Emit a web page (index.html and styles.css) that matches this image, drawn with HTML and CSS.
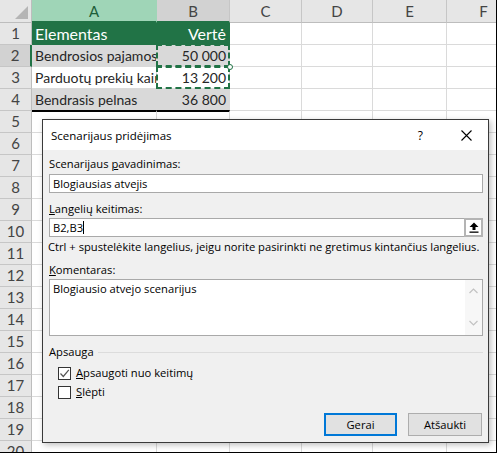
FILE: index.html
```html
<!DOCTYPE html>
<html lang="lt">
<head>
    <meta charset="UTF-8">
    <title>Scenarijaus pridėjimas</title>
    <link rel="stylesheet" href="styles.css">
</head>
<body>
    <div class="window">
        <div class="sheet" id="sheet">
            <div class="corner"><span class="tri"></span></div>
            <div class="ch ch-sel">A</div>
            <div class="ch ch-alt">B</div>
            <div class="ch">C</div>
            <div class="ch">D</div>
            <div class="ch">E</div>
            <div class="ch">F</div>

            <div class="rh">1</div>
            <div class="cell head">Elementas</div>
            <div class="cell head num">Vertė</div>
            <div class="cell"></div><div class="cell"></div><div class="cell"></div><div class="cell"></div>

            <div class="rh rh-sel">2</div>
            <div class="cell shade">Bendrosios pajamos</div>
            <div class="cell shade num ants handle">50 000</div>
            <div class="cell"></div><div class="cell"></div><div class="cell"></div><div class="cell"></div>

            <div class="rh">3</div>
            <div class="cell">Parduotų prekių kaina</div>
            <div class="cell num ants">13 200</div>
            <div class="cell"></div><div class="cell"></div><div class="cell"></div><div class="cell"></div>

            <div class="rh">4</div>
            <div class="cell shade">Bendrasis pelnas</div>
            <div class="cell shade num">36 800</div>
            <div class="cell"></div><div class="cell"></div><div class="cell"></div><div class="cell"></div>

            <div class="rh">5</div>
            <div class="cell edge"></div>
            <div class="cell edge"></div>
            <div class="cell"></div><div class="cell"></div><div class="cell"></div><div class="cell"></div>
        </div>

        <div class="dialog">
            <div class="dlg-title">
                <span class="dlg-caption">Scenarijaus pridėjimas</span>
                <span class="dlg-help">?</span>
                <svg class="dlg-close" width="11" height="11" viewBox="0 0 11 11">
                    <path d="M0.5 0.5 L10.5 10.5 M10.5 0.5 L0.5 10.5" stroke="#000" stroke-width="1.1" fill="none"/>
                </svg>
            </div>
            <div class="dlg-body">
                <div class="lbl">Scenarijaus <u>p</u>avadinimas:</div>
                <div class="field">Blogiausias atvejis</div>

                <div class="lbl lbl-gap"><u>L</u>angelių keitimas:</div>
                <div class="field field-ref">
                    <span>B2,B3</span><span class="caret"></span>
                    <span class="ref-btn">
                        <svg width="10" height="11" viewBox="0 0 10 11">
                            <path d="M5 0.5 L9.5 5 L6.5 5 L6.5 8 L3.5 8 L3.5 5 L0.5 5 Z" fill="#000"/>
                            <rect x="0.5" y="9.5" width="9" height="1.3" fill="#000"/>
                        </svg>
                    </span>
                </div>
                <div class="hint">Ctrl + spustelėkite langelius, jeigu norite pasirinkti ne gretimus kintančius langelius.</div>

                <div class="lbl lbl-gap"><u>K</u>omentaras:</div>
                <div class="memo">
                    <div class="memo-text">Blogiausio atvejo scenarijus</div>
                    <div class="scroll">
                        <svg width="9" height="6" viewBox="0 0 9 6"><path d="M0.5 5 L4.5 1 L8.5 5" stroke="#c2c2c2" stroke-width="1.2" fill="none"/></svg>
                        <svg width="9" height="6" viewBox="0 0 9 6"><path d="M0.5 1 L4.5 5 L8.5 1" stroke="#c2c2c2" stroke-width="1.2" fill="none"/></svg>
                    </div>
                </div>

                <div class="group">Apsauga</div>
                <label class="check first">
                    <span class="box">
                        <svg width="11" height="11" viewBox="0 0 11 11"><path d="M1.5 5.5 L4.3 8.5 L9.8 1.8" stroke="#555" stroke-width="1.2" fill="none"/></svg>
                    </span>
                    <span><u>A</u>psaugoti nuo keitimų</span>
                </label>
                <label class="check">
                    <span class="box"></span>
                    <span><u>S</u>lėpti</span>
                </label>

                <div class="btns">
                    <div class="btn primary">Gerai</div>
                    <div class="btn">Atšaukti</div>
                </div>
            </div>
        </div>
    </div>
    <script>
        const sheet = document.getElementById('sheet');
        for (let r = 6; r <= 20; r++) {
            let html = `<div class="rh">${r}</div>`;
            for (let c = 0; c < 6; c++) {
                html += '<div class="cell"></div>';
            }
            sheet.insertAdjacentHTML('beforeend', html);
        }
    </script>
</body>
</html>
```

FILE: styles.css
```css
body {
    margin: 0;
    background: #fff;
}

.window {
    position: relative;
    width: 497px;
    height: 453px;
    box-sizing: border-box;
    border-right: 1px solid #000;
    border-bottom: 1px solid #000;
    overflow: hidden;
}

.sheet {
    display: grid;
    grid-template-columns: 32px 125px 73px 72px 71px 74px 74px;
    grid-template-rows: 23px;
    grid-auto-rows: 22px;
    font-family: 'Lato', 'Liberation Sans', sans-serif;
    font-size: 15px;
    color: #262626;
}

.corner {
    position: relative;
    background: #e6e6e6;
    border-right: 1px solid #bdbdbd;
    border-bottom: 1px solid #bdbdbd;
}

.tri {
    position: absolute;
    right: 3px;
    bottom: 3px;
    width: 0;
    height: 0;
    border-left: 13px solid transparent;
    border-bottom: 13px solid #b5b5b5;
}

.ch {
    background: #e6e6e6;
    border-right: 1px solid #c6c6c6;
    border-bottom: 1px solid #bdbdbd;
    color: #444;
    text-align: center;
    line-height: 22px;
}

.ch-sel {
    background: #9fd5b7;
    color: #1e5e3a;
    border-bottom: 2px solid #217346;
    border-right-color: #9fd5b7;
}

.ch-alt {
    background: #d2d2d2;
    border-bottom: 2px solid #217346;
}

.rh {
    background: #e6e6e6;
    border-right: 1px solid #bdbdbd;
    border-bottom: 1px solid #c6c6c6;
    color: #444;
    text-align: center;
    line-height: 21px;
}

.rh-sel {
    background: #d2d2d2;
    border-right: 2px solid #217346;
}

.cell {
    position: relative;
    border-right: 1px solid #dadada;
    border-bottom: 1px solid #dadada;
    padding: 0 3px;
    font-size: 14px;
    line-height: 22px;
    white-space: nowrap;
    overflow: hidden;
}

.num {
    text-align: right;
    overflow: visible;
}

.head {
    background: #217346;
    color: #fff;
    border-color: #217346;
    font-size: 16px;
}

.shade {
    background: #d9d9d9;
    border-right-color: #d9d9d9;
    border-bottom-color: #d9d9d9;
}

.edge {
    border-top: 2px solid #000;
    margin-top: -1px;
}

.ants::after {
    content: '';
    position: absolute;
    left: -1px;
    top: -1px;
    right: -1px;
    bottom: -1px;
    border: 2px dashed #217346;
}

.handle::before {
    content: '';
    position: absolute;
    right: -4px;
    bottom: -4px;
    width: 4px;
    height: 4px;
    border: 1px solid #217346;
    border-radius: 50%;
    background: #fff;
    z-index: 1;
}

/* dialog */

.dialog {
    position: absolute;
    left: 42px;
    top: 119px;
    width: 447px;
    height: 324px;
    box-sizing: border-box;
    border: 1px solid #3a3a3a;
    background: #f0f0f0;
    box-shadow: 2px 2px 6px rgba(0, 0, 0, 0.25);
    display: flex;
    flex-direction: column;
    font-family: 'Open Sans', 'Noto Sans', sans-serif;
    font-size: 11.2px;
    color: #000;
}

.dlg-title {
    height: 30px;
    background: #fff;
    display: flex;
    align-items: center;
    padding-left: 8px;
    font-size: 11.5px;
}

.dlg-caption {
    flex: 1;
}

.dlg-help {
    margin-right: 38px;
    font-size: 12px;
}

.dlg-close {
    margin-right: 16px;
}

.dlg-body {
    flex: 1;
    display: flex;
    flex-direction: column;
    padding: 7px 5px 6px 6px;
}

.lbl {
    line-height: 14px;
    height: 14px;
    margin-bottom: 2px;
}

.lbl:first-child {
    margin-bottom: 3px;
}

.lbl-gap {
    margin-top: 9px;
}

.field {
    height: 19px;
    box-sizing: border-box;
    border: 1px solid #a9a9a9;
    background: #fff;
    padding-left: 3px;
    display: flex;
    align-items: center;
    white-space: nowrap;
}

.caret {
    width: 1px;
    height: 13px;
    background: #000;
}

.ref-btn {
    margin-left: auto;
    width: 19px;
    height: 19px;
    box-sizing: border-box;
    margin-right: -1px;
    border: 2px solid #b4b4b4;
    background: #fff;
    display: flex;
    align-items: center;
    justify-content: center;
}

.hint {
    line-height: 14px;
    margin-top: 3px;
    margin-left: -1px;
    white-space: nowrap;
}

.memo {
    height: 57px;
    box-sizing: border-box;
    border: 1px solid #a9a9a9;
    background: #fff;
    display: flex;
}

.memo-text {
    flex: 1;
    padding: 2px 3px;
    line-height: 14px;
}

.scroll {
    width: 17px;
    background: #f7f7f7;
    display: flex;
    flex-direction: column;
    justify-content: space-between;
    align-items: center;
    padding: 8px 0 9px;
}

.group {
    margin-top: 9px;
    line-height: 14px;
    display: flex;
    align-items: center;
    gap: 4px;
}

.group::after {
    content: '';
    flex: 1;
    border-top: 1px solid #dcdcdc;
}

.check {
    display: flex;
    align-items: center;
    gap: 5px;
    padding-left: 9px;
    line-height: 14px;
    margin-top: 5px;
}

.check.first {
    margin-top: 7px;
}

.box {
    width: 13px;
    height: 13px;
    box-sizing: border-box;
    border: 1px solid #333;
    background: #fff;
    display: flex;
    align-items: center;
    justify-content: center;
}

.btns {
    margin-top: auto;
    display: flex;
    justify-content: flex-end;
    gap: 11px;
    margin-right: 1px;
}

.btn {
    width: 74px;
    height: 23px;
    box-sizing: border-box;
    border: 1px solid #adadad;
    background: #e1e1e1;
    display: flex;
    align-items: center;
    justify-content: center;
}

.btn.primary {
    width: 73px;
    border: 2px solid #0078d7;
}
```
